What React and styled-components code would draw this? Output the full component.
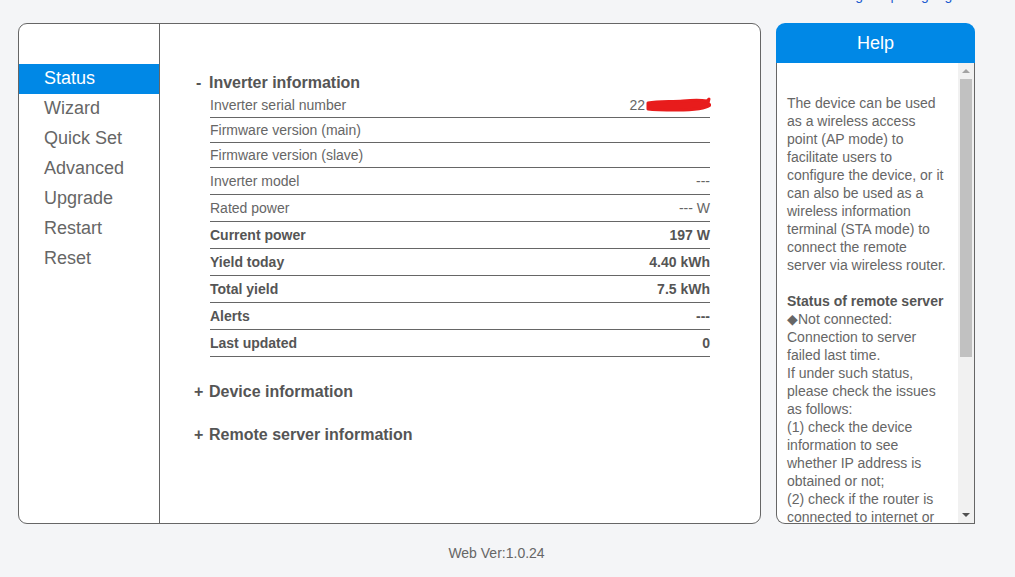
import React from "react";
import styled, { createGlobalStyle } from "styled-components";

const GlobalStyle = createGlobalStyle`
  html, body {
    margin: 0;
    padding: 0;
    background: #f4f5f7;
    font-family: "Liberation Sans", Arial, sans-serif;
  }
`;

const BLUE = "#0088e6";

const Page = styled.div`
  width: 1015px;
  height: 577px;
  overflow: hidden;
`;

const TopBar = styled.div`
  height: 23px;
  display: flex;
  justify-content: flex-end;
  padding-right: 55px;
  overflow: hidden;
`;

const TopLink = styled.a`
  color: #1a5bd0;
  font-size: 14px;
  margin-top: -13px;
  line-height: 16px;
  height: 16px;
  text-decoration: none;
`;

const Wrap = styled.div`
  display: flex;
  gap: 15px;
  padding-left: 18px;
`;

const MainPanel = styled.div`
  width: 743px;
  height: 501px;
  box-sizing: border-box;
  border: 1px solid #666;
  border-radius: 9px;
  background: #fff;
  display: flex;
  overflow: hidden;
`;

const Nav = styled.ul`
  list-style: none;
  margin: 0;
  padding: 40px 0 0;
  width: 140px;
  border-right: 1px solid #666;
  flex-shrink: 0;
`;

const NavItem = styled.li`
  height: 30px;
  line-height: 28px;
  padding-left: 25px;
  font-size: 18px;
  color: ${(p) => (p.$active ? "#fff" : "#666")};
  background: ${(p) => (p.$active ? BLUE : "transparent")};
`;

const Content = styled.div`
  flex: 1;
  padding: 49px 0 0 34px;
`;

const Section = styled.div`
  margin-bottom: ${(p) => p.$gap || 0}px;
`;

const SectionTitle = styled.div`
  display: flex;
  font-size: 16px;
  font-weight: bold;
  color: #555;
  height: 20px;
  line-height: 20px;
`;

const Sign = styled.span`
  width: ${(p) => p.$w}px;
  padding-left: ${(p) => p.$pl}px;
  box-sizing: border-box;
`;

const Table = styled.div`
  margin-left: 16px;
  width: 500px;
`;

const Row = styled.div`
  display: flex;
  justify-content: space-between;
  align-items: center;
  height: ${(p) => p.$h}px;
  border-bottom: 1px solid #666;
  font-size: 14px;
  font-weight: ${(p) => (p.$bold ? "bold" : "normal")};
  color: ${(p) => (p.$bold ? "#555" : "#666")};
`;

const Value = styled.span`
  display: flex;
  align-items: center;
`;

const Redacted = styled.svg`
  width: 66px;
  height: 16px;
  margin-right: -1px;
`;

const Help = styled.div`
  width: 199px;
  height: 501px;
  display: flex;
  flex-direction: column;
`;

const HelpHeader = styled.div`
  height: 40px;
  background: ${BLUE};
  border-radius: 9px 9px 0 0;
  color: #fff;
  font-size: 18px;
  line-height: 40px;
  text-align: center;
`;

const HelpBody = styled.div`
  flex: 1;
  display: flex;
  background: #fff;
  border: 1px solid #666;
  border-top: none;
  border-radius: 0 0 0 9px;
  overflow: hidden;
`;

const HelpText = styled.div`
  flex: 1;
  padding: 31px 12px 0 10px;
  font-size: 14px;
  line-height: 18px;
  color: #666;
  overflow: hidden;
`;

const Para = styled.p`
  margin: 0 0 18px;
`;

const Strong = styled.div`
  font-weight: bold;
  color: #555;
`;

const ScrollTrack = styled.div`
  width: 16px;
  background: #f1f1f1;
  display: flex;
  flex-direction: column;
  align-items: center;
`;

const Arrow = styled.div`
  height: 16px;
  width: 16px;
  display: flex;
  align-items: center;
  justify-content: center;
  &::after {
    content: "";
    border-left: 4px solid transparent;
    border-right: 4px solid transparent;
    ${(p) => (p.$down ? "border-top" : "border-bottom")}: 4px solid
      ${(p) => (p.$down ? "#505050" : "#a3a3a3")};
  }
`;

const Thumb = styled.div`
  width: 12px;
  height: 278px;
  background: #c1c1c1;
`;

const Spacer = styled.div`
  flex: 1;
`;

const Footer = styled.div`
  width: 957px;
  margin-left: 18px;
  text-align: center;
  font-size: 14px;
  color: #666;
  padding-top: 21px;
`;

const navItems = ["Status", "Wizard", "Quick Set", "Advanced", "Upgrade", "Restart", "Reset"];

const rows = [
  { label: "Inverter serial number", value: "serial", h: 24 },
  { label: "Firmware version (main)", value: "", h: 24 },
  { label: "Firmware version (slave)", value: "", h: 24 },
  { label: "Inverter model", value: "---", h: 26 },
  { label: "Rated power", value: "--- W", h: 26 },
  { label: "Current power", value: "197 W", h: 26, bold: true },
  { label: "Yield today", value: "4.40 kWh", h: 26, bold: true },
  { label: "Total yield", value: "7.5 kWh", h: 26, bold: true },
  { label: "Alerts", value: "---", h: 26, bold: true },
  { label: "Last updated", value: "0", h: 26, bold: true },
];

function SerialValue() {
  return (
    <Value>
      22
      <Redacted viewBox="0 0 66 16">
        <path
          d="M3 6 C14 4, 26 5, 38 4 C48 3, 56 3, 62 4 L64 2 L63 6 L65 8 C60 12, 46 13, 32 13 C20 13, 10 13, 3 12 Z"
          fill="#e81c1c"
          stroke="#e81c1c"
          strokeWidth="3"
          strokeLinejoin="round"
        />
      </Redacted>
    </Value>
  );
}

export default function App() {
  return (
    <Page>
      <GlobalStyle />
      <TopBar>
        <TopLink href="#">Log out | Language</TopLink>
      </TopBar>
      <Wrap>
        <MainPanel>
          <Nav>
            {navItems.map((n, i) => (
              <NavItem key={n} $active={i === 0}>
                {n}
              </NavItem>
            ))}
          </Nav>
          <Content>
            <Section $gap={25}>
              <SectionTitle>
                <Sign $w={15} $pl={2}>-</Sign>
                Inverter information
              </SectionTitle>
              <Table>
                {rows.map((r) => (
                  <Row key={r.label} $h={r.h} $bold={r.bold}>
                    <span>{r.label}</span>
                    {r.value === "serial" ? <SerialValue /> : <Value>{r.value}</Value>}
                  </Row>
                ))}
              </Table>
            </Section>
            <Section $gap={23}>
              <SectionTitle>
                <Sign $w={15} $pl={0}>+</Sign>
                Device information
              </SectionTitle>
            </Section>
            <Section>
              <SectionTitle>
                <Sign $w={15} $pl={0}>+</Sign>
                Remote server information
              </SectionTitle>
            </Section>
          </Content>
        </MainPanel>
        <Help>
          <HelpHeader>Help</HelpHeader>
          <HelpBody>
            <HelpText>
              <Para>
                The device can be used as a wireless access point (AP mode) to facilitate users to
                configure the device, or it can also be used as a wireless information terminal (STA
                mode) to connect the remote server via wireless router.
              </Para>
              <Strong>Status of remote server</Strong>
              <div>◆Not connected: Connection to server failed last time.</div>
              <div>If under such status, please check the issues as follows:</div>
              <div>(1) check the device information to see whether IP address is obtained or not;</div>
              <div>(2) check if the router is connected to internet or not;</div>
            </HelpText>
            <ScrollTrack>
              <Arrow />
              <Thumb />
              <Spacer />
              <Arrow $down />
            </ScrollTrack>
          </HelpBody>
        </Help>
      </Wrap>
      <Footer>Web Ver:1.0.24</Footer>
    </Page>
  );
}
